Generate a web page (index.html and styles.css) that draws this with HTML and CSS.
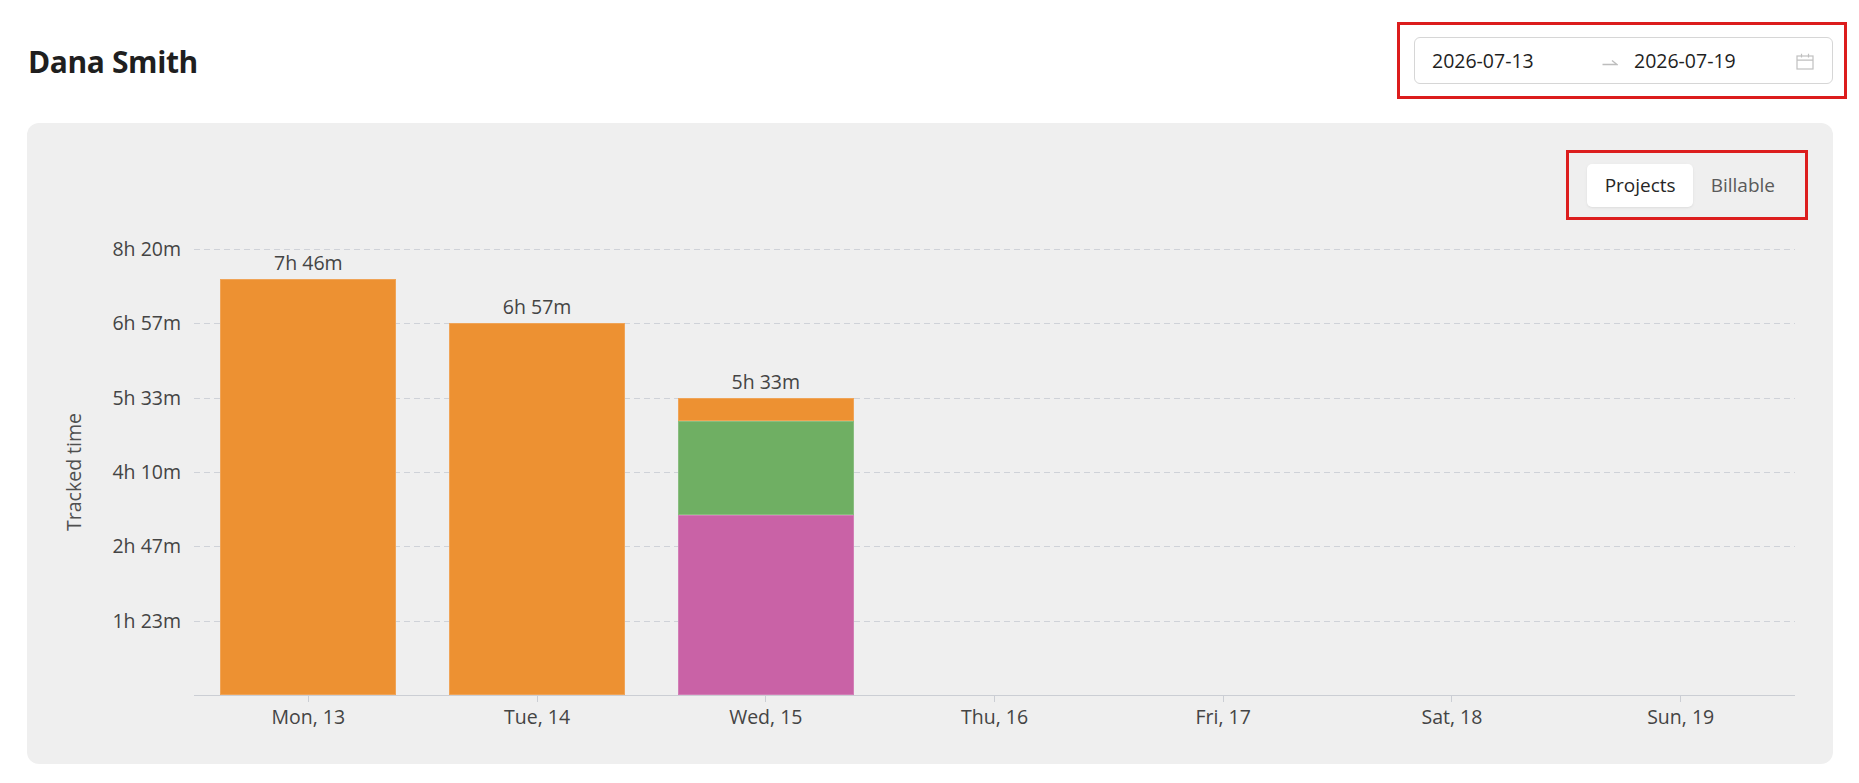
FILE: index.html
```html
<!DOCTYPE html>
<html lang="en">
<head>
<meta charset="utf-8">
<title>Dana Smith</title>
<link rel="stylesheet" href="styles.css">
</head>
<body>
<div class="page">
  <header class="header">
    <h1 class="title">Dana Smith</h1>
    <div class="picker-wrap">
      <div class="range-picker">
        <span class="range-input">2026-07-13</span>
        <span class="range-sep">
          <svg width="16" height="9" viewBox="0 0 16 9"><path d="M0.5 7.5 H15 L10 3.5" fill="none" stroke="#bdbdbd" stroke-width="1.4"/></svg>
        </span>
        <span class="range-input">2026-07-19</span>
        <span class="range-icon">
          <svg width="18" height="17" viewBox="0 0 18 17"><rect x="1" y="3" width="16" height="13" fill="none" stroke="#c0c0c0" stroke-width="1.2"/><path d="M1 7.2 H17 M5.5 0.8 V4.5 M12.5 0.8 V4.5" fill="none" stroke="#c0c0c0" stroke-width="1.2"/></svg>
        </span>
      </div>
      <div class="mark mark-picker"></div>
    </div>
  </header>

  <section class="card">
    <div class="toolbar">
      <div class="seg-wrap">
        <div class="seg">
          <span class="seg-item seg-active">Projects</span>
          <span class="seg-item">Billable</span>
        </div>
        <div class="mark mark-seg"></div>
      </div>
    </div>

    <div class="chart">
      <div class="y-title"><span>Tracked time</span></div>
      <div class="y-labels">
        <span>8h 20m</span>
        <span>6h 57m</span>
        <span>5h 33m</span>
        <span>4h 10m</span>
        <span>2h 47m</span>
        <span>1h 23m</span>
      </div>
      <div class="plot">
        <div class="grid-lines">
          <i></i><i></i><i></i><i></i><i></i><i></i>
        </div>
        <div class="bars">
          <div class="day">
            <span class="value">7h 46m</span>
            <div class="bar"><div class="seg-bar c-orange" style="height:415.7px"></div></div>
          </div>
          <div class="day">
            <span class="value">6h 57m</span>
            <div class="bar"><div class="seg-bar c-orange" style="height:372px"></div></div>
          </div>
          <div class="day">
            <span class="value">5h 33m</span>
            <div class="bar">
              <div class="seg-bar c-orange" style="height:23px"></div>
              <div class="seg-bar c-green" style="height:94px"></div>
              <div class="seg-bar c-pink" style="height:180px"></div>
            </div>
          </div>
          <div class="day"></div>
          <div class="day"></div>
          <div class="day"></div>
          <div class="day"></div>
        </div>
      </div>
      <div class="x-labels">
        <span>Mon, 13</span>
        <span>Tue, 14</span>
        <span>Wed, 15</span>
        <span>Thu, 16</span>
        <span>Fri, 17</span>
        <span>Sat, 18</span>
        <span>Sun, 19</span>
      </div>
    </div>
  </section>
</div>
</body>
</html>
```

FILE: styles.css
```css
* { box-sizing: border-box; }

html, body {
  margin: 0;
  padding: 0;
  background: #ffffff;
}

body {
  font-family: "Open Sans", "Noto Sans", "Liberation Sans", sans-serif;
  color: #333;
}

.page {
  width: 1859px;
  padding: 37px 26px 20px 27px;
}

.header {
  display: flex;
  align-items: center;
  justify-content: space-between;
  height: 47px;
}

.title {
  margin: 0 0 0 1px;
  font-size: 30px;
  font-weight: 700;
  letter-spacing: -0.4px;
  color: #1f1f1f;
  line-height: 41px;
  position: relative;
  top: 1px;
}

.picker-wrap {
  position: relative;
}

.range-picker {
  display: flex;
  align-items: center;
  width: 419px;
  height: 47px;
  padding: 0 18px 0 17px;
  border: 1px solid #d6d6d6;
  border-radius: 6px;
  background: #fff;
}

.range-input {
  width: 154px;
  font-size: 19.5px;
  color: #1f1f1f;
  line-height: 24px;
}

.range-sep {
  display: flex;
  align-items: center;
  width: 48px;
  justify-content: center;
  padding-top: 2px;
}

.range-icon {
  display: flex;
  margin-left: 8px;
  padding-top: 1px;
}

.mark {
  position: absolute;
  border: 3px solid #dc1d1d;
  pointer-events: none;
}

.mark-picker {
  top: -15px;
  left: -17px;
  right: -14px;
  bottom: -15px;
}

.card {
  margin-top: 39px;
  height: 641px;
  background: #efefef;
  border-radius: 12px;
  padding: 39px 38px 0 36px;
}

.toolbar {
  display: flex;
  justify-content: flex-end;
}

.seg-wrap {
  position: relative;
}

.seg {
  display: flex;
  padding: 2px;
  border-radius: 7px;
}

.seg-item {
  height: 43px;
  line-height: 43px;
  padding: 0 18px;
  font-size: 19px;
  color: #5a5a5a;
  border-radius: 5px;
}

.seg-active {
  background: #ffffff;
  color: #262626;
  padding: 0 17px 0 18px;
  box-shadow: 0 1px 2px rgba(0, 0, 0, 0.05), 0 1px 4px rgba(0, 0, 0, 0.03);
}

.mark-seg {
  top: -12px;
  left: -19px;
  right: -13px;
  bottom: -11px;
}

.chart {
  margin-top: 40px;
  display: grid;
  grid-template-columns: 22px 109px 1601px;
  grid-template-rows: 446px auto;
}

.y-title {
  grid-column: 1;
  grid-row: 1;
  display: flex;
  align-items: center;
  justify-content: center;
}

.y-title span {
  writing-mode: vertical-rl;
  transform: rotate(180deg);
  font-size: 19.5px;
  line-height: 22px;
  color: #4f4f4f;
  white-space: nowrap;
}

.y-labels {
  grid-column: 2;
  grid-row: 1;
  display: flex;
  flex-direction: column;
  align-items: flex-end;
  padding-right: 13px;
  margin-top: -12px;
}

.y-labels span {
  height: 74.333px;
  line-height: 24px;
  font-size: 19.5px;
  color: #444;
  white-space: nowrap;
}

.plot {
  grid-column: 3;
  grid-row: 1;
  display: grid;
  border-bottom: 1px solid #cbced4;
  height: 447px;
}

.grid-lines,
.bars {
  grid-area: 1 / 1;
}

.grid-lines {
  display: flex;
  flex-direction: column;
}

.grid-lines i {
  display: block;
  height: 74.333px;
  background-image: repeating-linear-gradient(to right, #cfd2d8 0 6px, transparent 6px 10px);
  background-size: 100% 1px;
  background-repeat: no-repeat;
}

.bars {
  display: flex;
}

.day {
  flex: 1;
  display: flex;
  flex-direction: column;
  justify-content: flex-end;
  align-items: center;
}

.value {
  font-size: 19.5px;
  line-height: 24px;
  color: #444;
  margin-bottom: 4.5px;
  white-space: nowrap;
}

.bar {
  width: 176px;
  display: flex;
  flex-direction: column;
}

.seg-bar {
  width: 100%;
  border: 1px solid rgba(255, 255, 255, 0.18);
}

.c-orange { background: #ed9132; }
.c-green { background: #6faf63; }
.c-pink { background: #c962a6; }

.x-labels {
  grid-column: 3;
  grid-row: 2;
  display: flex;
}

.x-labels span {
  flex: 1;
  display: flex;
  flex-direction: column;
  align-items: center;
  font-size: 19.5px;
  line-height: 24px;
  color: #444;
  white-space: nowrap;
}

.x-labels span::before {
  content: "";
  display: block;
  width: 1px;
  height: 7px;
  background: #cbced4;
  margin-bottom: 3px;
}
```
